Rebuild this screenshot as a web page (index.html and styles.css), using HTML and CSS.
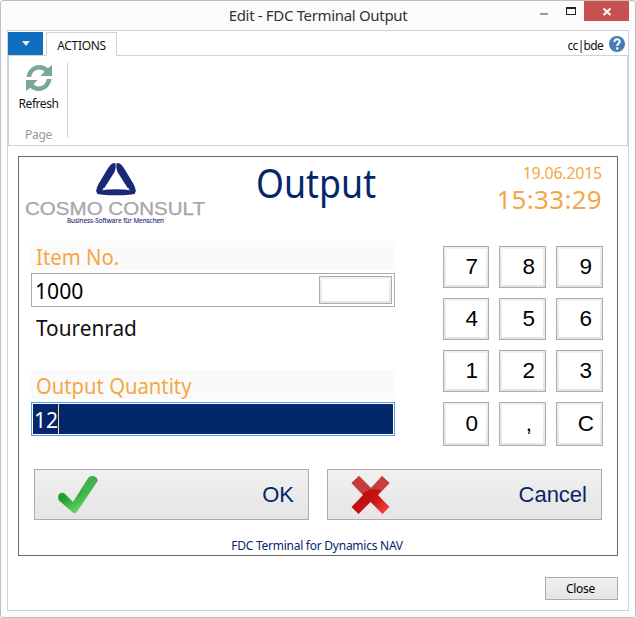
FILE: index.html
```html
<!DOCTYPE html>
<html lang="en">
<head>
<meta charset="utf-8">
<title>Edit - FDC Terminal Output</title>
<link rel="stylesheet" href="styles.css">
</head>
<body>
<div class="window">
  <header class="titlebar">
    <span class="title">Edit - FDC Terminal Output</span>
    <div class="controls">
      <svg width="89" height="20" viewBox="0 0 89 20" shape-rendering="crispEdges">
        <rect x="0" y="12" width="8" height="2" fill="#999"/>
        <path d="M26 6h10v8H26z" fill="#222"/><path d="M27 8h8v5h-8z" fill="#fbfbfb"/>
        <rect x="44" y="0" width="45" height="20" fill="#c75050"/>
        <path d="M63.500 7.500l7 6.500M70.500 7.500l-7 6.500" stroke="#fff" stroke-width="1.900" shape-rendering="auto"/>
      </svg>
    </div>
  </header>
  <main class="content">
    <nav class="tabs">
      <div class="menu"><svg width="8" height="5" viewBox="0 0 8 5"><path d="M0 0h8L4 5z" fill="#e6f1fb"/></svg></div>
      <div class="tab"><span class="t-actions">ACTIONS</span></div>
      <div class="user"><span class="t-user">cc|bde</span>
        <svg width="16" height="16" viewBox="0 0 16 16"><circle cx="8" cy="8" r="8" fill="#477db3"/><path d="M5.400 6C5.400 2.300 10.700 2.500 10.700 5.500C10.700 7.500 8.200 7.600 8.200 9.900" fill="none" stroke="#fff" stroke-width="2"/><rect x="7.100" y="11.300" width="2.200" height="2.200" fill="#fff"/></svg>
      </div>
    </nav>
    <section class="ribbon">
      <div class="group">
        <svg class="refresh" width="26" height="26" viewBox="0 0 26 26" fill="#78a898"><path d="M.5 12C1.500 5 6.500 0 13.500 0c3.500 0 6.200 1.300 8.200 3.200L26 0v11H14.500l4-4.200C17 5.300 15.500 4.600 13.400 4.600C9 4.600 5.900 7.400 5.300 12z"/><path d="M25.500 14C24.500 21 19.500 26 12.500 26c-3.500 0-6.200-1.300-8.200-3.200L0 26V15h11.500l-4 4.200c1.500 1.500 3 2.200 5.100 2.200c4.400 0 7.500-2.800 8.100-7.400z"/></svg>
        <span class="t-refresh">Refresh</span>
        <span class="t-page">Page</span>
      </div>
    </section>
    <section class="panel">
      <div class="head">
        <svg class="logo" width="182" height="62" viewBox="0 0 182 62">
          <g fill="#1b2777">
            <path d="M89 0C92.500 0 91 5 89.500 9L80 24Q75 31 72 30Q70 28 73.500 21L82.500 6Q86 0 89 0Z"/>
            <path d="M93 0C89.500 0 91 5 92.500 9L102 24Q107 31 110 30Q112 28 108.500 21L99.500 6Q96 0 93 0Z"/>
            <path d="M72 30.500Q74 26.300 91 26.300T110 30.500Q108 32.300 91 32.300T72 30.500Z"/>
          </g>
          <path d="M78 25.500H104M91 0V8" stroke="#fff" stroke-width=".7"/>
          <text class="brand" x="0" y="51.700" textLength="180" lengthAdjust="spacingAndGlyphs">COSMO CONSULT</text>
          <text class="slogan" x="42" y="60" textLength="97" lengthAdjust="spacingAndGlyphs">Business-Software für Menschen</text>
        </svg>
        <h1><span class="t-output">Output</span></h1>
        <div class="clock"><span class="date">19.06.2015</span><span class="time">15:33:29</span></div>
      </div>
      <div class="work">
        <div class="fields">
          <div class="label"><span class="t-item">Item No.</span></div>
          <div class="input"><span class="t-num">1000</span><i class="lookup"></i></div>
          <div class="desc"><span class="t-desc">Tourenrad</span></div>
          <div class="label"><span class="t-qty">Output Quantity</span></div>
          <div class="input active"><div class="selection"><span class="t-num">12</span><i class="caret"></i></div></div>
        </div>
        <div class="keypad">
          <button>7</button><button>8</button><button>9</button>
          <button>4</button><button>5</button><button>6</button>
          <button>1</button><button>2</button><button>3</button>
          <button>0</button><button class="comma">,</button><button class="clear">C</button>
        </div>
      </div>
      <div class="actions">
        <button class="action">
          <svg width="40" height="40" viewBox="0 0 40 40">
            <defs><linearGradient id="g" x1="0" y1="0" x2=".7" y2="1"><stop offset="0" stop-color="#3aa845"/><stop offset=".45" stop-color="#1f9c2b"/><stop offset="1" stop-color="#7be878"/></linearGradient></defs>
            <path d="M.5 20Q2 17 6 18L15 27L30 3.500Q32 .5 36 1.200Q40 3 39.500 6L20 35.500Q17 40.500 13 36L1 25.500Q-.5 23 .5 20Z" fill="url(#g)"/>
            <path d="M30 3.500Q32 .5 36 1.200Q40 3 39.500 6L32.500 16.500Q27 15 22.300 15.500Z" fill="#4fb862" opacity=".7"/>
          </svg>
          <span class="t-ok">OK</span>
        </button>
        <button class="action">
          <svg width="40" height="40" viewBox="0 0 40 40">
            <defs><linearGradient id="r" x1="0" y1="0" x2="1" y2="1"><stop offset=".3" stop-color="#bd0a0a"/><stop offset=".6" stop-color="#c51313"/><stop offset="1" stop-color="#ff4c4c"/></linearGradient></defs>
            <path d="M8 1L20 13L31 1L38.500 8L27 20L38.500 32L31.500 39L19.500 27L7.500 39L.5 32L12 20L.5 8Z" fill="url(#r)"/>
            <path d="M8 1L20 13L31 1L38.500 8L31 15.500Q20 12 11 19L.5 8Z" fill="#ce6262" opacity=".55"/>
          </svg>
          <span class="t-cancel">Cancel</span>
        </button>
      </div>
      <div class="note"><span class="t-note">FDC Terminal for Dynamics NAV</span></div>
    </section>
    <footer><button class="close"><span class="t-close">Close</span></button></footer>
  </main>
</div>
</body>
</html>
```
FILE: styles.css
```css
* { box-sizing: border-box; }
body {
  margin: 0;
  background: #fff;
  font-family: "Noto Sans", "Open Sans", sans-serif;
  color: #111;
}
span { white-space: nowrap; }
svg { display: block; flex: none; }
button { font: inherit; margin: 0; border-radius: 0; }

.window {
  width: 636px;
  height: 618px;
  border: 1px solid #bfbfbf;
  border-radius: 3px;
  background: #fbfbfb;
  padding: 0 6px 6px;
}
.titlebar {
  height: 29px;
  display: grid;
  grid-template-columns: 1fr auto;
}
.title {
  grid-column: 1 / 3;
  grid-row: 1;
  text-align: center;
  font-size: 15px;
  line-height: 29px;
  letter-spacing: -.33px;
  color: #333;
}
.controls { grid-column: 2; grid-row: 1; }

.content {
  width: 622px;
  height: 581px;
  border: 1px solid #d2d2d2;
  background: #fff;
}
.tabs { height: 25px; padding-top: 1px; display: flex; border-bottom: 1px solid #d2d2d2; }
.menu {
  width: 35px;
  height: 23px;
  background: #106ebe;
  display: flex;
  align-items: center;
  justify-content: center;
}
.tab {
  width: 71px;
  height: 24px;
  margin-left: 3px;
  border: 1px solid #d2d2d2;
  border-bottom: 0;
  background: #fff;
  text-align: center;
  font-size: 12px;
  line-height: 25px;
}
.t-actions { letter-spacing: -.3px; }
.user {
  margin-left: auto;
  padding: 0 3px 0 0;
  display: flex;
  align-items: center;
  gap: 6px;
  font-size: 12px;
}
.t-user { letter-spacing: -.7px; padding-top: 3px; }
.ribbon {
  height: 90px;
  border: solid #d2d2d2;
  border-width: 0 1px 1px;
  padding-top: 7px;
}
.group {
  width: 59px;
  height: 75px;
  padding-left: 1px;
  border-right: 1px solid #d2d2d2;
  display: flex;
  flex-direction: column;
  align-items: center;
  font-size: 12px;
  line-height: 16px;
}
.refresh { margin-top: 2px; }
.t-refresh { margin-top: 5px; letter-spacing: -.45px; }
.t-page { margin-top: 15px; color: #999; letter-spacing: -.3px; }

.panel {
  width: 600px;
  height: 400px;
  margin: 10px 0 0 10px;
  border: 1px solid #666;
}
.head { height: 84px; display: flex; padding-left: 6px; }
.logo { margin-top: 6px; }
.brand { font: 17.500px "Liberation Sans", sans-serif; fill: #a6a6a6; stroke: #a6a6a6; stroke-width: .25px; }
.slogan { font: 7.500px "Open Sans", sans-serif; fill: #1b2777; stroke: #1b2777; stroke-width: .15px; }

.t-output, .t-item, .t-qty, .t-desc, .t-num { display: inline-block; transform-origin: 0 50%; }
.t-output { transform: scaleX(.895); }
.t-item { transform: scaleX(.925); }
.t-qty { transform: scaleX(.92); }
.t-desc { transform: scaleX(.945); }
.t-num { transform: scaleX(.96); }

h1 {
  width: 132px;
  margin: 0 0 0 49px;
  font-weight: 400;
  font-size: 40px;
  line-height: 52px;
  color: #04266a;
}
.clock {
  margin-left: auto;
  padding: 5px 15px 0 0;
  display: flex;
  flex-direction: column;
  align-items: flex-end;
  color: #f4a747;
}
.date { font-size: 16px; line-height: 22px; letter-spacing: -.25px; }
.time { font-size: 26px; line-height: 31px; letter-spacing: .3px; }

.work { display: flex; padding-left: 12px; height: 228px; }
.fields { width: 364px; }
.label {
  height: 29px;
  margin-bottom: 3px;
  padding-left: 5px;
  background: #fafafa;
  color: #f4a747;
  font-size: 22px;
  line-height: 30px;
}
.input {
  height: 34px;
  border: 1px solid #acacac;
  padding: 2px 2px 2px 3px;
  display: flex;
  justify-content: space-between;
  align-items: center;
  font-size: 22px;
  color: #000;
}
.lookup { width: 73px; height: 28px; border: 1px solid #acacac; padding: 2px; background: linear-gradient(#fff, #fff) content-box, linear-gradient(#f0f0f0, #e5e5e5); }
.desc { height: 63px; padding: 5px 0 0 5px; font-size: 22px; line-height: 30px; }
.input.active { border-color: #569de5; padding: 1px; }
.selection {
  width: 100%;
  height: 30px;
  padding-left: 1px;
  background: #04266a;
  color: #fff;
  display: flex;
  align-items: center;
}
.caret { width: 1px; height: 30px; margin-left: -1px; background: #fbd985; }

.keypad {
  margin: 5px 0 0 48px;
  height: 200px;
  display: grid;
  grid-template-columns: 46px 47px 47px;
  grid-template-rows: 42px 42px 42px 44px;
  gap: 10px;
}
.keypad button {
  border: 1px solid #acacac;
  padding: 2px;
  background: linear-gradient(#fff, #fff) content-box, linear-gradient(#f0f0f0, #e5e5e5);
  font: 22.500px/36px "Liberation Sans", sans-serif;
  color: #000;
  text-align: right;
}
.keypad button::after { content: ""; display: inline-block; width: 8px; }
.keypad button.clear::after { width: 6px; }
.keypad button.comma::after { width: 11px; }

.actions { display: flex; gap: 18px; padding-left: 15px; }
.action {
  width: 275px;
  height: 51px;
  padding: 0 14px 0 23px;
  border: 1px solid #acacac;
  background: linear-gradient(#f0f0f0, #e5e5e5);
  display: flex;
  align-items: center;
  justify-content: space-between;
  font: 22px "Liberation Sans", sans-serif;
  color: #04266a;
}
.note { margin-top: 16px; padding-right: 2px; text-align: center; font-size: 12px; line-height: 20px; color: #04266a; }
.t-note { letter-spacing: -.25px; }
footer { display: flex; justify-content: flex-end; padding: 21px 10px 0 0; }
.close {
  width: 73px;
  height: 23px;
  padding: 0 2px 0 0;
  border: 1px solid #acacac;
  background: linear-gradient(#f0f0f0, #e5e5e5);
  font-size: 12px;
  line-height: 21px;
}
.t-close { letter-spacing: -.3px; }
```
